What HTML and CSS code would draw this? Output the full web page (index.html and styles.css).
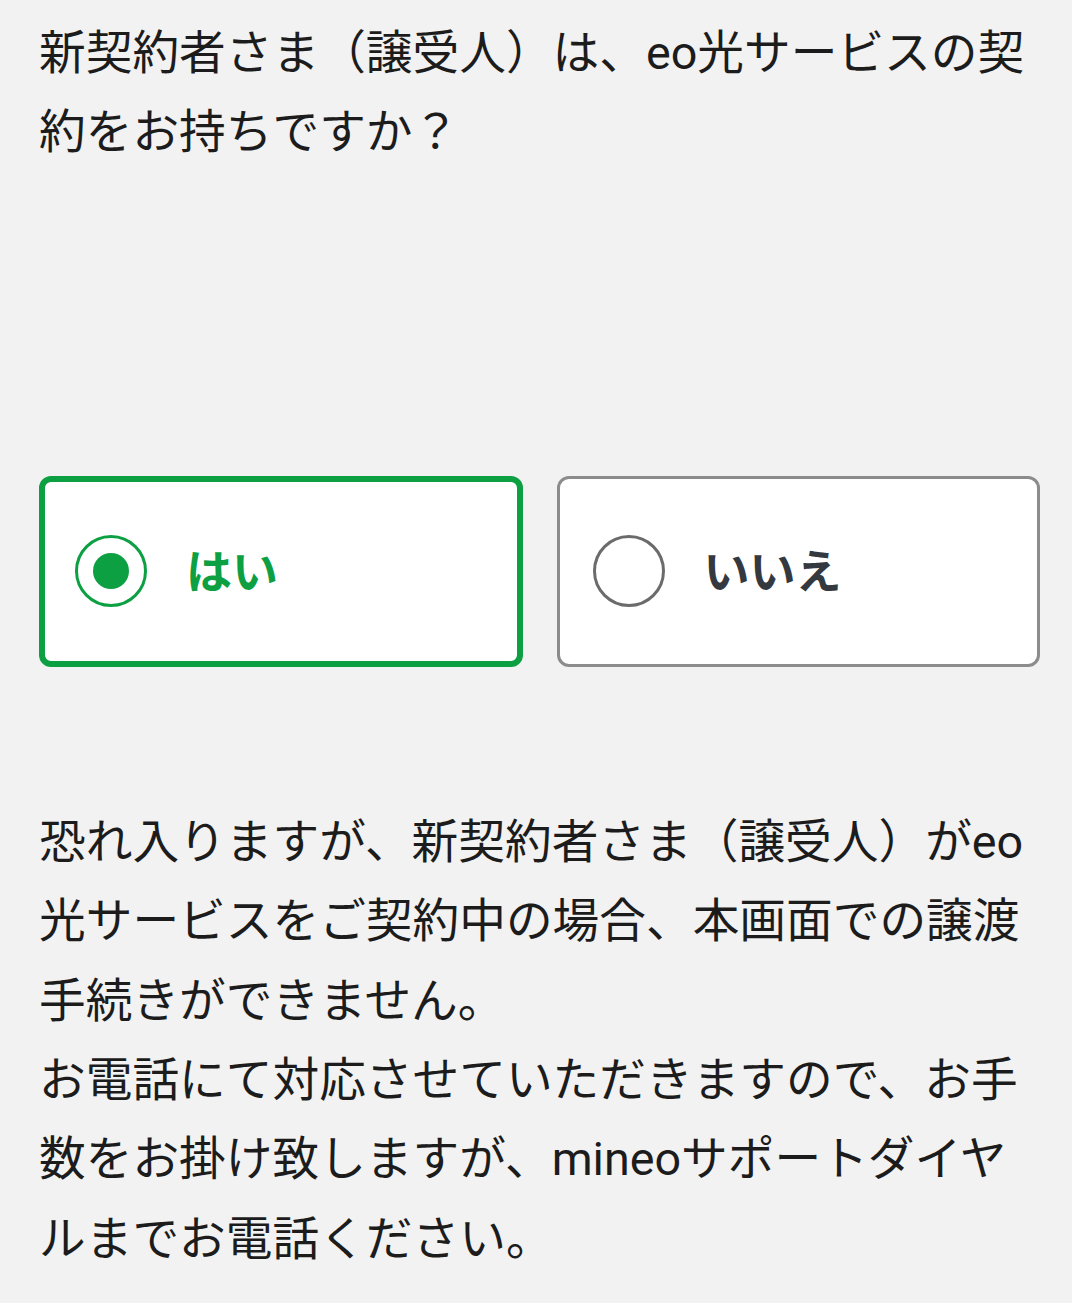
FILE: index.html
```html
<!DOCTYPE html>
<html lang="ja">
<head>
    <meta charset="UTF-8">
    <meta name="viewport" content="width=device-width, initial-scale=1.0">
    <title>譲渡手続き</title>
    <link rel="stylesheet" href="styles.css">
</head>
<body>
<div class="page">
    <p class="question">新契約者さま（譲受人）は、eo光サービスの契約をお持ちですか？</p>

    <div class="options">
        <label class="option selected">
            <span class="radio"></span>
            <span class="option-label">はい</span>
        </label>
        <label class="option">
            <span class="radio"></span>
            <span class="option-label">いいえ</span>
        </label>
    </div>

    <p class="notice">恐れ入りますが、新契約者さま（譲受人）がeo光サービスをご契約中の場合、本画面での譲渡手続きができません。<br>お電話にて対応させていただきますので、お手数をお掛け致しますが、mineoサポートダイヤルまでお電話ください。</p>
</div>
</body>
</html>
```

FILE: styles.css
```css
body {
    margin: 0;
    background-color: #f2f2f2;
    font-family: Roboto, "Noto Sans CJK JP", sans-serif;
    color: #1c1c1c;
}
.page {
    padding: 14px 32px 40px 39px;
}
.question,
.notice {
    margin: 0;
    font-size: 46.7px;
    line-height: 79.4px;
}
.options {
    display: grid;
    grid-template-columns: 1fr 1fr;
    gap: 34px;
    margin-top: 303px;
}
.option {
    display: flex;
    align-items: center;
    gap: 39px;
    height: 191px;
    box-sizing: border-box;
    padding-left: 33px;
    background: white;
    border: 3px solid #8c8c8c;
    border-radius: 12px;
}
.option.selected {
    padding-left: 30px;
    border: 6px solid #0ca043;
}
.radio {
    position: relative;
    flex: none;
    width: 72px;
    height: 72px;
    box-sizing: border-box;
    border: 3px solid #6b6b6b;
    border-radius: 50%;
}
.selected .radio {
    border-color: #0ca043;
}
.selected .radio::after {
    content: "";
    position: absolute;
    top: 15px;
    left: 15px;
    width: 36px;
    height: 36px;
    border-radius: 50%;
    background: #0ca043;
}
.option-label {
    font-family: "Noto Sans CJK JP", sans-serif;
    font-size: 46px;
    font-weight: bold;
    line-height: 1;
    padding-bottom: 6px;
    color: #33393f;
}
.selected .option-label {
    color: #0ca043;
}
.notice {
    margin-top: 136px;
}
```
